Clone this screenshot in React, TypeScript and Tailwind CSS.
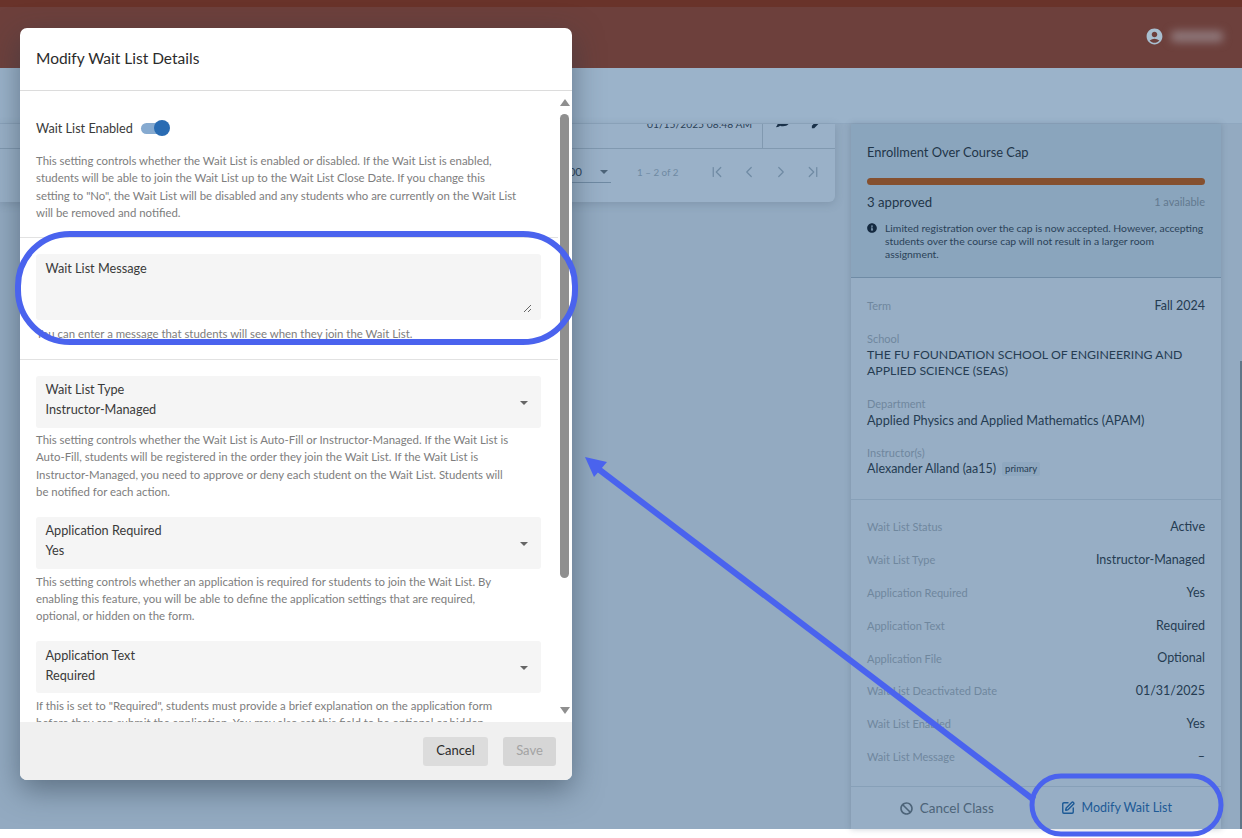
import { FaBan, FaComment, FaInfoCircle } from "react-icons/fa";
import { MdAccountCircle, MdEdit } from "react-icons/md";
import { ChevronFirst, ChevronLast, ChevronLeft, ChevronRight, SquarePen } from "lucide-react";

const INFO_ROWS = [
  ["Wait List Status", "Active"],
  ["Wait List Type", "Instructor-Managed"],
  ["Application Required", "Yes"],
  ["Application Text", "Required"],
  ["Application File", "Optional"],
  ["Wait List Deactivated Date", "01/31/2025"],
  ["Wait List Enabled", "Yes"],
  ["Wait List Message", "–"],
];

function Caret({ className }: { className: string }) {
  return <span className={`h-0 w-0 border-x-[4px] border-t-[4px] border-x-transparent ${className}`} />;
}

function SelectField({ label, value, textClass = "pb-[6px]" }: { label: string; value: string; textClass?: string }) {
  return (
    <div className="flex h-[52px] items-center justify-between rounded-[3px] bg-[#f5f5f5] pl-[9.5px] pr-[13px]">
      <div className={`text-[12.7px] leading-[20px] text-[#3a3a3a] ${textClass}`}>
        <div>{label}</div>
        <div>{value}</div>
      </div>
      <Caret className="mt-[2px] border-t-[#666666]" />
    </div>
  );
}

function Help({ children, className = "" }: { children: React.ReactNode; className?: string }) {
  return <p className={`text-[11.4px] leading-[17.4px] text-[#7d7d7d] ${className}`}>{children}</p>;
}

function Background() {
  return (
    <div className="flex h-[829px] flex-col bg-[#93aac1]">
      <div className="h-[7px] bg-[#69332a]" />
      <div className="flex h-[61px] items-center justify-end bg-[#6d403c] pr-[19px]">
        <MdAccountCircle className="mb-[3px] mr-[7px] text-[#a9bfd0]" size={19} />
        <div className="mb-[3px] h-[11px] w-[52px] rounded bg-[#8f787b] blur-[4px]" />
      </div>
      <div className="h-[56px] border-b border-[#8fa7bf] bg-[#9bb3ca]" />
      <div className="flex min-h-0 flex-1">
        <div className="mr-[16px] flex h-[78px] w-[835px] flex-col rounded-br-[6px] bg-[#9ab1c8] shadow-[0_2px_8px_rgba(70,90,110,0.25)]">
          <div className="flex h-[25px] justify-end overflow-hidden border-b border-[#8199b0]">
            <span className="-mt-[7px] mr-[10px] text-[10.3px] leading-[14px] text-[#2b4258]">01/15/2025 08:48 AM</span>
            <div className="flex w-[73px] items-start gap-[20px] border-l border-[#8199b0] pl-[13px]">
              <FaComment className="-mt-[10px] text-[#1a3149]" size={14} />
              <MdEdit className="-mt-[9px] text-[#1a3149]" size={15} />
            </div>
          </div>
          <div className="flex flex-1 items-center pb-[7px] pr-[13px] text-[#6f8aa3]">
            <div className="ml-[560px] flex h-[22px] w-[51px] items-center justify-between border-b border-[#6f8aa3] pl-[2px] pr-[3px] text-[11.5px] text-[#2b4258]">
              <span>100</span>
              <Caret className="border-t-[#4d6479]" />
            </div>
            <span className="ml-[26px] text-[9.8px]">1 – 2 of 2</span>
            <div className="ml-auto flex gap-[14px]">
              <ChevronFirst size={18} strokeWidth={1.6} />
              <ChevronLeft size={18} strokeWidth={1.6} />
              <ChevronRight size={18} strokeWidth={1.6} />
              <ChevronLast size={18} strokeWidth={1.6} />
            </div>
          </div>
        </div>
        <div className="flex w-[370px] flex-col bg-[#97aec5] shadow-[0_0_6px_rgba(70,90,110,0.3)]">
          <div className="h-[154px] border-b border-[#6f8ba5] bg-[#8aa5bd] px-[16px] pt-[19px]">
            <div className="text-[12.9px] leading-[18px] text-[#1f3549]">Enrollment Over Course Cap</div>
            <div className="mt-[17px] h-[7px] rounded-full bg-[#85502f]" />
            <div className="mt-[8px] flex h-[18px] items-center justify-between">
              <span className="text-[13.2px] leading-[18px] text-[#1f3549]">3 approved</span>
              <span className="text-[11px] text-[#62798f]">1 available</span>
            </div>
            <div className="mt-[10.5px] flex gap-[8px]">
              <FaInfoCircle className="mt-[1.5px] shrink-0 text-[#14293f]" size={10} />
              <p className="text-[10.4px] leading-[13px] whitespace-nowrap text-[#2b4258]">
                Limited registration over the cap is now accepted. However, accepting
                <br />
                students over the course cap will not result in a larger room
                <br />
                assignment.
              </p>
            </div>
          </div>
          <div className="h-[222px] border-b border-[#87a0b8] px-[16px] pt-[20px] text-[12.5px] leading-[16px] text-[#253c52]">
            <div className="flex items-center justify-between">
              <span className="text-[11px] text-[#6f879e]">Term</span>
              <span>Fall 2024</span>
            </div>
            <div className="mt-[17px] text-[11px] text-[#6f879e]">School</div>
            <div className="text-[12.3px]">THE FU FOUNDATION SCHOOL OF ENGINEERING AND APPLIED SCIENCE (SEAS)</div>
            <div className="mt-[17px] text-[11px] text-[#6f879e]">Department</div>
            <div className="text-[12.7px]">Applied Physics and Applied Mathematics (APAM)</div>
            <div className="mt-[17px] text-[11px] text-[#6f879e]">Instructor(s)</div>
            <div className="flex items-center gap-[6px]">
              <span>Alexander Alland (aa15)</span>
              <span className="rounded-[2px] bg-[#8fa8c0] px-[3px] text-[9.5px] leading-[14px]">primary</span>
            </div>
          </div>
          <div className="flex h-[287px] flex-col border-b border-[#87a0b8] px-[16px] pt-[11px] text-[12.5px] text-[#253c52]">
            {INFO_ROWS.map(([label, value]) => (
              <div key={label} className="flex h-[32.86px] items-center justify-between">
                <span className="text-[11px] text-[#6f879e]">{label}</span>
                <span>{value}</span>
              </div>
            ))}
          </div>
          <div className="flex flex-1 items-center">
            <div className="flex flex-1 items-center justify-center gap-[7px] pl-[11px] text-[13.5px] text-[#4d6479]">
              <FaBan size={13} />
              Cancel Class
            </div>
            <div className="flex flex-1 items-center justify-center gap-[7px] pr-[20px] text-[12.5px] text-[#1d5a96]">
              <SquarePen size={14} strokeWidth={2.4} />
              Modify Wait List
            </div>
          </div>
        </div>
        <div className="ml-auto h-[468px] w-[2px] self-end bg-[#5f7688]" />
      </div>
    </div>
  );
}

function Modal() {
  return (
    <div className="absolute left-[20px] top-[28px] flex h-[752px] w-[552px] flex-col overflow-hidden rounded-[7px] bg-white shadow-[0_10px_30px_rgba(40,55,70,0.5)]">
      <div className="flex h-[63px] shrink-0 items-center border-b border-[#dcdcdc] pb-[1px] pl-[16px] text-[15.5px] text-[#2b2b2b]">
        Modify Wait List Details
      </div>
      <div className="flex min-h-0 flex-1">
        <div className="min-w-0 flex-1 overflow-hidden">
          <div className="h-[147px] border-b border-[#e2e2e2] pl-[16px] pr-[17px] pt-[27px]">
            <div className="flex h-[20px] items-center text-[12.7px] text-[#3a3a3a]">
              <span className="pt-[1px]">Wait List Enabled</span>
              <div className="relative ml-[8px] h-[11px] w-[25px] rounded-full bg-[#86aad0]">
                <span className="absolute -right-[4px] -top-[3px] h-[16px] w-[16px] rounded-full bg-[#2a6cb3]" />
              </div>
            </div>
            <Help className="mt-[14px]">
              This setting controls whether the Wait List is enabled or disabled. If the Wait List is enabled,
              <br />
              students will be able to join the Wait List up to the Wait List Close Date. If you change this
              <br />
              setting to "No", the Wait List will be disabled and any students who are currently on the Wait List
              <br />
              will be removed and notified.
            </Help>
          </div>
          <div className="h-[122px] border-b border-[#e2e2e2] pl-[16px] pr-[17px] pt-[16px]">
            <div className="relative h-[66px] rounded-[3px] bg-[#f5f5f5] pl-[9.5px] pt-[4px] text-[12.7px] leading-[20px] text-[#3a3a3a]">
              Wait List Message
              <svg className="absolute bottom-[7px] right-[9px]" width="9" height="9" viewBox="0 0 9 9" stroke="#666666">
                <path d="M1 8 8 1M5 8l3-3" />
              </svg>
            </div>
            <Help className="mt-[5px]">You can enter a message that students will see when they join the Wait List.</Help>
          </div>
          <div className="pl-[16px] pr-[17px] pt-[16px]">
            <SelectField label="Wait List Type" value="Instructor-Managed" />
            <Help className="mt-[3px] whitespace-nowrap">
              This setting controls whether the Wait List is Auto-Fill or Instructor-Managed. If the Wait List is
              <br />
              Auto-Fill, students will be registered in the order they join the Wait List. If the Wait List is
              <br />
              Instructor-Managed, you need to approve or deny each student on the Wait List. Students will
              <br />
              be notified for each action.
            </Help>
            <div className="mt-[16px]">
              <SelectField label="Application Required" value="Yes" />
            </div>
            <Help className="mt-[4px] whitespace-nowrap">
              This setting controls whether an application is required for students to join the Wait List. By
              <br />
              enabling this feature, you will be able to define the application settings that are required,
              <br />
              optional, or hidden on the form.
            </Help>
            <div className="mt-[16px]">
              <SelectField label="Application Text" value="Required" textClass="pb-[4px]" />
            </div>
            <Help className="mt-[4px] whitespace-nowrap">
              If this is set to "Required", students must provide a brief explanation on the application form
              <br />
              before they can submit the application. You may also set this field to be optional or hidden.
            </Help>
          </div>
        </div>
        <div className="flex w-[14px] shrink-0 flex-col items-center pr-[1px] pt-[8px]">
          <span className="h-0 w-0 border-x-[5px] border-b-[7px] border-x-transparent border-b-[#8f8f8f]" />
          <div className="mt-[8px] h-[464px] w-[9px] rounded-full bg-[#8f8f8f]" />
          <span className="mt-[129px] h-0 w-0 border-x-[5px] border-t-[7px] border-x-transparent border-t-[#8f8f8f]" />
        </div>
      </div>
      <div className="flex h-[58px] shrink-0 items-center justify-end gap-[15px] bg-[#f0f0f0] pr-[16px] text-[13px]">
        <button className="h-[29px] w-[65px] rounded-[3px] bg-[#dcdcdc] text-[#2b2b2b]">Cancel</button>
        <button className="h-[29px] w-[53px] rounded-[3px] bg-[#d6d6d6] text-[#a3a3a3]">Save</button>
      </div>
    </div>
  );
}

function Annotations() {
  return (
    <svg className="pointer-events-none absolute inset-0" width="1242" height="838" fill="none" stroke="#4a63ee" strokeWidth="6">
      <rect x="18" y="234" width="557" height="108" rx="52" />
      <rect x="1032" y="776" width="189" height="58" rx="29" strokeWidth="5" />
      <path d="M1034 800 597 468" />
      <path d="M585 457 607 462 594 477Z" fill="#4a63ee" stroke="none" />
    </svg>
  );
}

export default function App() {
  return (
    <div className="relative h-[838px] w-[1242px] overflow-hidden bg-white font-['Lato','Noto_Sans',sans-serif]">
      <Background />
      <Modal />
      <Annotations />
    </div>
  );
}
